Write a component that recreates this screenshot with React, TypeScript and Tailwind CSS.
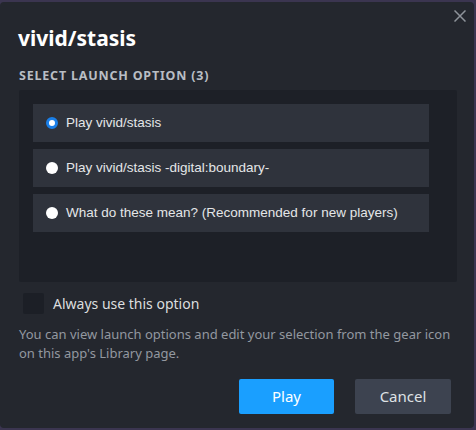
import { useState } from "react";

const OPTIONS = [
  "Play vivid/stasis",
  "Play vivid/stasis -digital:boundary-",
  "What do these mean? (Recommended for new players)",
];

export default function App() {
  const [selected, setSelected] = useState(0);
  const [always, setAlways] = useState(false);

  return (
    <div className="w-[476px] h-[430px] bg-[#3b3550] pt-[2px] pr-[2px] pb-[2px] overflow-hidden">
      <div
        className="relative h-full rounded-[4px] bg-[#24272e] px-[19px] pt-[22px] text-[#dcdedf]"
        style={{ fontFamily: '"Noto Sans", "Open Sans", sans-serif' }}
      >
        {/* close */}
        <button className="absolute right-[8px] top-[8px] w-[12px] h-[12px] text-[#8e939a]">
          <svg viewBox="0 0 12 12" className="w-[12px] h-[12px]" fill="none" stroke="currentColor" strokeWidth="1.5">
            <path d="M0.5 0.5 L11.5 11.5 M11.5 0.5 L0.5 11.5" />
          </svg>
        </button>

        <h1 className="text-[21px] font-bold leading-[28px] text-white -ml-[1px]">vivid/stasis</h1>

        <div className="mt-[16px] text-[12.5px] font-bold tracking-[0.8px] text-[#b9bec4] leading-[16px]">
          SELECT LAUNCH OPTION (3)
        </div>

        {/* options panel */}
        <div className="mt-[6px] h-[192px] w-[438px] bg-[#1d2027] rounded-[2px] pl-[14px] pr-[28px] pt-[14px] flex flex-col gap-[7px]">
          {OPTIONS.map((o, i) => (
            <button
              key={o}
              onClick={() => setSelected(i)}
              className="h-[38px] w-full bg-[#2f333c] flex items-center pl-[13px] gap-[8px] text-left"
              style={{ fontFamily: '"Liberation Sans", Arial, sans-serif' }}
            >
              <span
                className={
                  selected === i
                    ? "w-[12px] h-[12px] rounded-full bg-white border-[3px] border-[#1a7fe8] shrink-0"
                    : "w-[12px] h-[12px] rounded-full bg-white shrink-0"
                }
              />
              <span className="text-[13.5px] text-[#e4e6e8]">{o}</span>
            </button>
          ))}
        </div>

        {/* always use */}
        <label className="mt-[11px] ml-[4px] flex items-center gap-[9px] cursor-pointer" onClick={() => setAlways(!always)}>
          <span className="w-[21px] h-[21px] rounded-[2px] bg-[#1c1f26] shrink-0" />
          <span className="text-[14px] text-[#dcdedf]">Always use this option</span>
        </label>

        <p className="mt-[11px] text-[13px] leading-[19px] text-[#9398a0] w-[438px]">
          You can view launch options and edit your selection from the gear icon on this app's Library page.
        </p>

        <div className="mt-[16px] flex justify-end gap-[21px] pr-[4px]">
          <button className="w-[95px] h-[35px] rounded-[2px] bg-[#1a9fff] text-white text-[15px]">Play</button>
          <button className="w-[96px] h-[35px] rounded-[2px] bg-[#3d4350] text-[#dfe1e4] text-[15px]">Cancel</button>
        </div>
      </div>
    </div>
  );
}
